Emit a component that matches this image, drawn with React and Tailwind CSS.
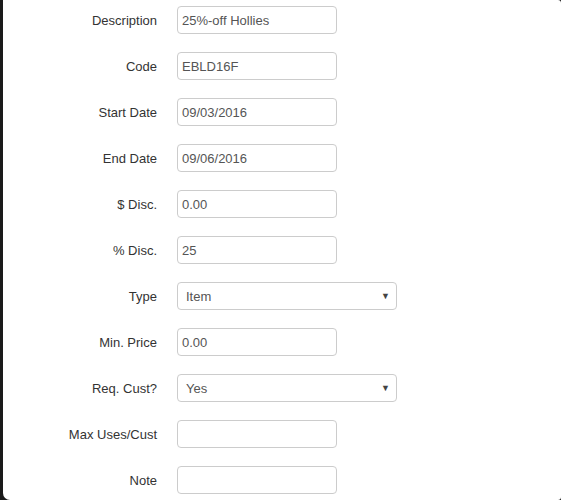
import React from "react";

const rows = [
  { label: "Description", value: "25%-off Hollies" },
  { label: "Code", value: "EBLD16F" },
  { label: "Start Date", value: "09/03/2016" },
  { label: "End Date", value: "09/06/2016" },
  { label: "$ Disc.", value: "0.00" },
  { label: "% Disc.", value: "25" },
  { label: "Type", value: "Item", select: true },
  { label: "Min. Price", value: "0.00" },
  { label: "Req. Cust?", value: "Yes", select: true },
  { label: "Max Uses/Cust", value: "" },
  { label: "Note", value: "" },
];

export default function App() {
  return (
    <div className="w-[561px] h-[500px] bg-[#1a1a1a] overflow-hidden flex" style={{ fontFamily: '"Liberation Sans", Arial, sans-serif' }}>
      <div className="ml-[3px] flex-1 h-full bg-white rounded-bl-[7px] rounded-tr-[3px] rounded-br-[3px] pt-[6px] flex flex-col gap-[18px]">
        {rows.map((r) => (
          <div key={r.label} className="flex items-center h-[28px]">
            <div className="w-[154px] text-right text-[13px] text-[#333] pt-[2px]">{r.label}</div>
            {r.select ? (
              <div className="ml-[20px] w-[220px] h-[28px] border border-[#ccc] rounded-[4px] flex items-center justify-between pl-[8px] pr-[6px] pt-[2px] text-[13px] text-[#555]">
                <span>{r.value}</span>
                <span className="text-[9px] text-[#444]">▼</span>
              </div>
            ) : (
              <div className="ml-[20px] w-[160px] h-[28px] border border-[#ccc] rounded-[4px] flex items-center pl-[4px] pt-[2px] text-[13px] text-[#555]">
                {r.value}
              </div>
            )}
          </div>
        ))}
      </div>
    </div>
  );
}
